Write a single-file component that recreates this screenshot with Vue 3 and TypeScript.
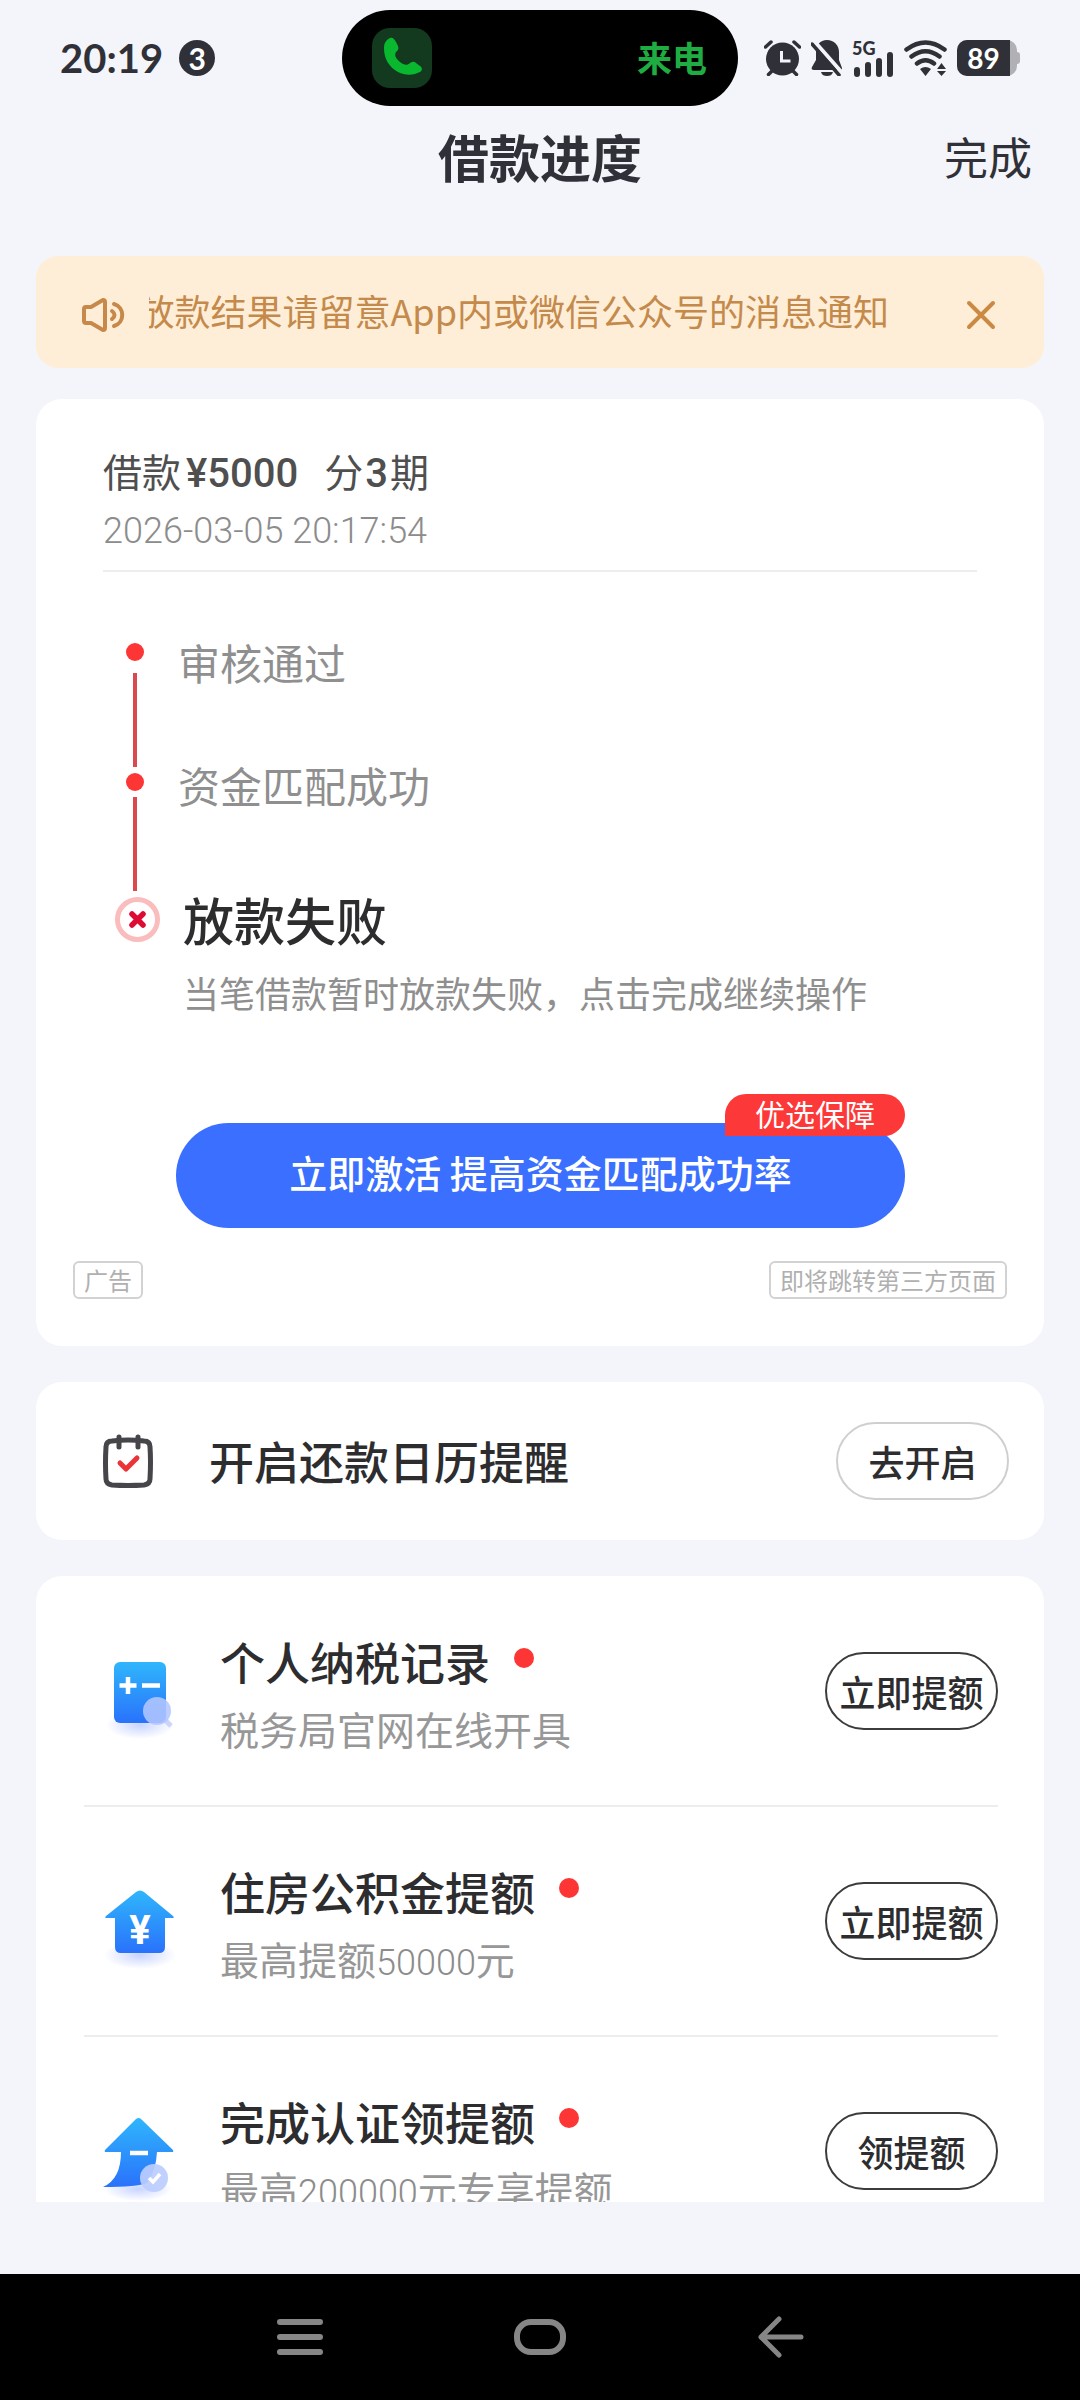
<script setup lang="ts">
import { ref } from 'vue'

interface Offer {
  id: 'tax' | 'fund' | 'verify'
  title: string
  lead: string
  amount: string
  tail: string
  action: string
}

const noticeVisible = ref(true)

const offers: Offer[] = [
  { id: 'tax', title: '个人纳税记录', lead: '税务局官网在线开具', amount: '', tail: '', action: '立即提额' },
  { id: 'fund', title: '住房公积金提额', lead: '最高提额', amount: '50000', tail: '元', action: '立即提额' },
  { id: 'verify', title: '完成认证领提额', lead: '最高', amount: '200000', tail: '元专享提额', action: '领提额' },
]
</script>

<template>
  <div class="page">
    <div class="status">
      <div class="status-left">
        <span class="clock">20:19</span>
        <span class="count">3</span>
      </div>
      <div class="island">
        <span class="call-icon">
          <svg width="60" height="60" viewBox="0 0 60 60" aria-hidden="true">
            <path d="M18 10c2-1 4 0 6 4l2 4c1 3 0 4-2 6-2 3 0 7 4 10 4 3 7 4 10 1 2-1 4-2 6 0l4 3c3 2 2 5 0 6-6 3-14 4-22 0C17 39 12 31 12 20c0-5 2-8 6-10z" fill="#09b82f" />
          </svg>
        </span>
        <span class="call-text">来电</span>
      </div>
      <div class="status-right">
        <svg width="37" height="36" viewBox="0 0 37 36" aria-hidden="true">
          <circle cx="18.500" cy="19" r="16.500" fill="#303138" />
          <path d="M1.500 7 7 2M30 2l5.500 5M4.500 34.500 9 30M32.500 34.500 28 30" stroke="#303138" stroke-width="3.500" stroke-linecap="round" />
          <path d="M17.500 11v10h9" fill="none" stroke="#f4f5fa" stroke-width="3" />
        </svg>
        <svg width="31" height="36" viewBox="0 0 31 36" aria-hidden="true">
          <path d="M16 0c7 0 12 5 12 12v8l3 8c0 2-1 2-2 2H3c-2 0-3-1-2-3l4-7v-8C5 5 9 0 16 0zM10 32h12c-1 3-3 4-6 4s-5-1-6-4z" fill="#303138" />
          <path d="M3 1 33 35" stroke="#f4f5fa" stroke-width="4" />
          <path d="M1 4 28 35" stroke="#303138" stroke-width="3.500" stroke-linecap="round" />
        </svg>
        <span class="signal">
          <span class="network">5G</span>
          <svg width="42" height="26" viewBox="0 0 42 26" aria-hidden="true">
            <path d="M5 19v4M16 14v9M27 10v13M38 4v19" stroke="#303138" stroke-width="6" stroke-linecap="round" />
          </svg>
        </span>
        <svg width="43" height="36" viewBox="0 0 43 36" aria-hidden="true">
          <path d="M2.500 9.500Q21.500-4.500 40.500 9.500M7.500 16.500q14-10.500 28 0M13 23.500q8.500-6.500 17 0" fill="none" stroke="#303138" stroke-width="4.500" stroke-linecap="round" />
          <path d="M16 29q5.500-4 11 0l-5.500 7zM33 29l4.500-6 4.500 6zM33 31h9l-4.500 5z" fill="#303138" />
        </svg>
        <span class="battery"><span class="level">89</span></span>
      </div>
    </div>

    <header class="header">
      <h1>借款进度</h1>
      <button type="button" class="done">完成</button>
    </header>

    <main class="content">
      <section v-if="noticeVisible" class="notice">
        <svg width="48" height="48" viewBox="0 0 48 48" fill="none" stroke="#c6894a" stroke-width="4" stroke-linecap="round" stroke-linejoin="round" aria-hidden="true">
          <path d="M7 16h5l12-7q2 0 2 2v26q0 2-2 2l-12-7H7q-2 0-2-2V18q0-2 2-2z" />
          <path d="M33 20q5 4 0 8M35 13c11 3 11 19 0 22" />
        </svg>
        <div class="ticker"><p>放款结果请留意App内或微信公众号的消息通知</p></div>
        <button type="button" class="close" aria-label="关闭" @click="noticeVisible = false">
          <svg width="32" height="32" viewBox="0 0 32 32" aria-hidden="true">
            <path d="M4 4l24 24M28 4 4 28" stroke="#cb8a44" stroke-width="4" stroke-linecap="round" />
          </svg>
        </button>
      </section>

      <section class="card">
        <div class="summary">
          <p class="loan">借款<b class="yen">¥5000</b>分<b>3</b>期</p>
          <time datetime="2026-03-05T20:17:54">2026-03-05 20:17:54</time>
        </div>

        <div class="progress">
          <div class="rail" aria-hidden="true">
            <i class="dot first"></i>
            <i class="line"></i>
            <i class="dot"></i>
            <i class="line"></i>
            <svg width="45" height="45" viewBox="0 0 45 45">
              <circle cx="22.500" cy="22.500" r="20" fill="#fff" stroke="#fabcbc" stroke-width="5" />
              <path d="M17 17l11 11M28 17 17 28" stroke="#dc0c35" stroke-width="5.500" stroke-linecap="round" />
            </svg>
          </div>
          <ol class="steps">
            <li>审核通过</li>
            <li>资金匹配成功</li>
            <li class="failed">
              <h2>放款失败</h2>
              <p>当笔借款暂时放款失败，点击完成继续操作</p>
            </li>
          </ol>
        </div>

        <div class="cta">
          <button type="button">立即激活 提高资金匹配成功率</button>
          <span class="ribbon">优选保障</span>
        </div>

        <div class="tags">
          <span>广告</span>
          <span>即将跳转第三方页面</span>
        </div>
      </section>

      <section class="card reminder">
        <svg width="50" height="56" viewBox="0 0 50 56" fill="none" stroke-linecap="round" stroke-linejoin="round" aria-hidden="true">
          <path d="M9 8q16-2 32 0 6 0 6 6 1 14 0 32 0 5-6 6-16 1-32 0-6-1-6-6-1-16 0-32 0-6 6-6z" stroke="#46464a" stroke-width="5" />
          <path d="M16 4v10M35 4v10" stroke="#46464a" stroke-width="5" />
          <path d="M17 30l6 6 11-11" stroke="#ec3338" stroke-width="5" />
        </svg>
        <h2>开启还款日历提醒</h2>
        <button type="button" class="pill light">去开启</button>
      </section>

      <ul class="card offers">
        <li v-for="offer in offers" :key="offer.id">
          <svg v-if="offer.id === 'tax'" class="art" width="78" height="80" viewBox="0 0 78 80" aria-hidden="true">
            <defs>
              <linearGradient id="sky" x1="0" y1="0" x2="0" y2="1">
                <stop offset="0" stop-color="#2fb6fc" />
                <stop offset="1" stop-color="#2a72fb" />
              </linearGradient>
              <radialGradient id="glow">
                <stop offset="0" stop-color="#c8d4ff" />
                <stop offset="1" stop-color="#c8d4ff" stop-opacity="0" />
              </radialGradient>
            </defs>
            <ellipse cx="40" cy="74" rx="34" ry="14" fill="url(#glow)" />
            <rect x="14" y="11" width="52" height="61" rx="6" fill="url(#sky)" />
            <path d="M19.500 34.500h17M28 26v17M42 34.500h18" stroke="#fff" stroke-width="4.500" />
            <path d="M65 69l6 6" stroke="#ccd5fb" stroke-width="5" />
            <circle cx="57" cy="60" r="14" fill="#b3c6ff" fill-opacity=".88" />
          </svg>
          <svg v-else-if="offer.id === 'fund'" class="art" width="78" height="80" viewBox="0 0 78 80" aria-hidden="true">
            <ellipse cx="40" cy="74" rx="36" ry="14" fill="url(#glow)" />
            <path d="M36 11q4-3 8 0l29 24q2 2-1 2h-7v29q0 6-6 6H21q-6 0-6-6V37H7q-3 0-1-2z" fill="url(#sky)" />
            <text x="40" y="63" class="coin">¥</text>
          </svg>
          <svg v-else class="art" width="78" height="80" viewBox="0 0 78 80" aria-hidden="true">
            <ellipse cx="38" cy="78" rx="34" ry="12" fill="url(#glow)" />
            <path d="M36 8q3-2 5 0l32 31q1 2-1 2H57q-1 19-10 31-10 4-44 4 18-8 18-35H6q-2 0-1-2z" fill="url(#sky)" />
            <path d="M30 42h18" stroke="#fff" stroke-width="4.500" />
            <circle cx="54" cy="67" r="14" fill="#bccdff" fill-opacity=".92" />
            <path d="M49 67l4 4 7-8" fill="none" stroke="#fff" stroke-width="3.500" />
          </svg>
          <div class="info">
            <h3>{{ offer.title }}<i></i></h3>
            <p>{{ offer.lead }}<span v-if="offer.amount">{{ offer.amount }}</span>{{ offer.tail }}</p>
          </div>
          <button type="button" class="pill">{{ offer.action }}</button>
        </li>
      </ul>
    </main>

    <nav class="system-nav">
      <button type="button" aria-label="最近任务">
        <svg width="52" height="44" viewBox="0 0 52 44" aria-hidden="true">
          <path d="M6 7h40M6 22h40M6 37h40" stroke="#868686" stroke-width="6" stroke-linecap="round" />
        </svg>
      </button>
      <button type="button" aria-label="主屏幕">
        <svg width="52" height="44" viewBox="0 0 52 44" aria-hidden="true">
          <rect x="3" y="7" width="46" height="30" rx="14" fill="none" stroke="#868686" stroke-width="6" />
        </svg>
      </button>
      <button type="button" aria-label="返回">
        <svg width="52" height="44" viewBox="0 0 52 44" fill="none" stroke="#868686" stroke-width="5" stroke-linecap="round" stroke-linejoin="round" aria-hidden="true">
          <path d="M25 4 7 22l18 18M7 22h40" />
        </svg>
      </button>
    </nav>
  </div>
</template>

<style>
body {
  background: #f4f5fa;
}
</style>

<style scoped>
.page {
  display: flex;
  flex-direction: column;
  height: 100vh;
  overflow: hidden;
  background: #f4f5fa;
  color: #2d2d2f;
  font-family: "Noto Sans CJK SC", "Noto Sans", sans-serif;
}

.page * {
  box-sizing: border-box;
}

svg {
  display: block;
  flex: none;
}

h1,
h2,
h3,
p,
ol,
ul {
  margin: 0;
  padding: 0;
  list-style: none;
}

button {
  flex: none;
  margin: 0;
  padding: 0;
  border: 0;
  background: none;
  color: inherit;
  font: inherit;
  cursor: pointer;
}

.status {
  display: grid;
  grid-template-columns: 1fr 396px 1fr;
  align-items: center;
  flex: none;
  height: 116px;
  padding: 0 60px;
  color: #303138;
  font-family: Lato, "Noto Sans CJK SC", sans-serif;
  font-weight: 700;
}

.status-left,
.status-right {
  display: flex;
  align-items: center;
}

.status-left {
  gap: 16px;
}

.status-right {
  justify-content: flex-end;
  gap: 10px;
}

.clock {
  font-size: 40px;
  line-height: 48px;
}

.count {
  width: 36px;
  height: 36px;
  border-radius: 50%;
  background: #303138;
  color: #fff;
  font-size: 30px;
  line-height: 36px;
  text-align: center;
}

.island {
  display: flex;
  align-items: center;
  justify-content: space-between;
  height: 96px;
  padding: 0 31px 0 30px;
  border-radius: 48px;
  background: #000;
}

.call-icon {
  border-radius: 18px;
  background: #133a1f;
}

.call-text {
  padding-bottom: 2px;
  color: #1fac42;
  font-family: "Noto Sans CJK SC", sans-serif;
  font-size: 35px;
  line-height: 48px;
}

.signal {
  display: flex;
  flex-direction: column;
  justify-content: flex-end;
  position: relative;
  height: 38px;
}

.network {
  position: absolute;
  top: 0;
  left: 0;
  font-size: 18px;
  font-weight: 900;
  line-height: 18px;
}

.battery {
  display: flex;
  position: relative;
  width: 60px;
  height: 36px;
  margin-right: 3px;
  border-radius: 10px;
  background: #b1b1b5;
}

.battery::after {
  content: "";
  position: absolute;
  top: 12px;
  right: -3px;
  width: 3px;
  height: 12px;
  border-radius: 0 3px 3px 0;
  background: #b1b1b5;
}

.level {
  width: 53px;
  border-radius: 10px 0 0 10px;
  background: #303138;
  color: #fff;
  font-size: 28px;
  line-height: 36px;
  text-align: center;
}

.header {
  display: grid;
  grid-template-columns: 1fr auto 1fr;
  align-items: center;
  flex: none;
  height: 80px;
  padding: 0 48px;
  color: #303138;
}

.header h1 {
  grid-column: 2;
  font-size: 51px;
  font-weight: 700;
  line-height: 80px;
}

.done {
  justify-self: end;
  font-size: 44px;
  line-height: 80px;
}

.content {
  display: flex;
  flex: 1;
  flex-direction: column;
  gap: 36px;
  min-height: 0;
  margin: 60px 36px 72px;
  overflow-y: auto;
  scrollbar-width: none;
}

.content > * {
  flex: none;
}

.notice {
  display: flex;
  align-items: center;
  height: 112px;
  margin-bottom: -5px;
  padding: 5px 47px 0 43px;
  border-radius: 22px;
  background: #ffeed7;
  color: #c48a4c;
}

.ticker {
  display: flex;
  flex: 1;
  justify-content: flex-end;
  min-width: 0;
  margin: 0 76px 0 22px;
  padding-bottom: 9px;
  overflow: hidden;
}

.ticker p {
  flex: none;
  font-size: 36px;
  line-height: 56px;
  white-space: nowrap;
}

.card {
  border-radius: 26px;
  background: #fff;
}

.summary {
  margin: 0 67px;
  padding: 42px 0 9px;
  border-bottom: 2px solid #ededed;
}

.loan {
  height: 58px;
  color: #4f4f4f;
  font-size: 39px;
  line-height: 58px;
}

.loan b {
  padding: 0 2px;
  font-family: Roboto, sans-serif;
  font-size: 40px;
  font-weight: 500;
  line-height: 40px;
}

.loan .yen {
  padding: 0 26px 0 5px;
}

.summary time {
  display: block;
  padding-top: 2px;
  color: #8c8c8c;
  font-family: Roboto, sans-serif;
  font-size: 36px;
  font-weight: 300;
  line-height: 60px;
}

.progress {
  display: flex;
  gap: 18px;
  margin: 69px 79px 0;
}

.rail {
  display: flex;
  flex: none;
  flex-direction: column;
  gap: 6px;
  width: 45px;
  padding-top: 2px;
}

.dot {
  width: 18px;
  height: 18px;
  margin-left: 11px;
  border-radius: 50%;
  background: #fd3535;
}

.dot.first {
  margin-bottom: 6px;
}

.line {
  width: 4px;
  height: 94px;
  margin-left: 18px;
  background: #dc4850;
}

.steps {
  color: #8f8f8f;
  font-size: 42px;
  line-height: 42px;
}

.steps li {
  height: 123px;
}

.steps .failed {
  height: auto;
  padding-left: 5px;
}

.failed h2 {
  color: #2d2d2f;
  font-size: 51px;
  font-weight: 500;
  line-height: 64px;
}

.failed p {
  margin-top: 16px;
  font-size: 36px;
  line-height: 50px;
}

.cta {
  position: relative;
  margin: 106px 139px 0 140px;
}

.cta button {
  display: block;
  width: 100%;
  height: 105px;
  padding-bottom: 8px;
  border-radius: 53px;
  background: #3a6fff;
  color: #fff;
  font-size: 38px;
  font-weight: 500;
}

.ribbon {
  position: absolute;
  top: -29px;
  right: 0;
  height: 42px;
  padding: 0 30px;
  border-radius: 21px 21px 21px 0;
  background: #fd3838;
  color: #fff;
  font-size: 30px;
  line-height: 39px;
}

.tags {
  display: flex;
  justify-content: space-between;
  padding: 33px 37px 47px;
}

.tags span {
  height: 38px;
  padding: 0 9px;
  border: 2px solid #d2d2d2;
  border-radius: 6px;
  color: #b0b0b0;
  font-size: 24px;
  line-height: 33px;
}

.reminder {
  display: flex;
  align-items: center;
  height: 158px;
  padding: 0 35px 0 67px;
}

.reminder h2 {
  flex: 1;
  padding-left: 56px;
  font-size: 45px;
  font-weight: 500;
  line-height: 66px;
}

.pill {
  width: 173px;
  height: 78px;
  border: 2px solid #3c3c3c;
  border-radius: 39px;
  font-size: 36px;
  font-weight: 500;
  line-height: 74px;
}

.pill.light {
  border-color: #cfcfcf;
}

.offers {
  padding: 1px 46px 0 48px;
}

.offers li {
  display: flex;
  align-items: center;
  height: 230px;
  padding-left: 16px;
  border-bottom: 2px solid #ededed;
}

.art {
  overflow: visible;
}

.coin {
  fill: #fff;
  font-family: Roboto, sans-serif;
  font-size: 40px;
  font-weight: 700;
  text-anchor: middle;
}

.info {
  flex: 1;
  padding: 8px 0 0 42px;
}

.info h3 {
  display: flex;
  align-items: center;
  gap: 24px;
  font-size: 45px;
  font-weight: 500;
  line-height: 66px;
}

.info h3 i {
  width: 20px;
  height: 20px;
  margin-bottom: 8px;
  border-radius: 50%;
  background: #fd3535;
}

.info p {
  height: 66px;
  color: #979797;
  font-size: 39px;
  line-height: 66px;
}

.info p span {
  color: #8c8c8c;
  font-family: Roboto, sans-serif;
  font-size: 36px;
  font-weight: 300;
  line-height: 36px;
}

.system-nav {
  display: flex;
  align-items: center;
  flex: none;
  height: 126px;
  padding: 0 calc(100% / 6);
  background: #000;
}

.system-nav button {
  display: flex;
  flex: 1;
  justify-content: center;
}
</style>
